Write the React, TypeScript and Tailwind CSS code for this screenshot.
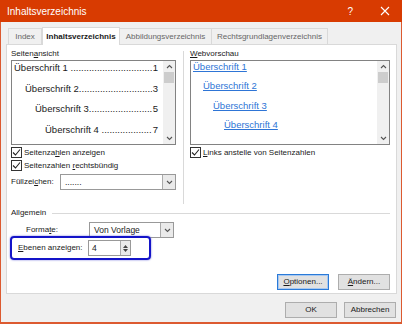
import React from "react";

const F = { fontFamily: '"Liberation Sans", Arial, sans-serif' };

function Check() {
  return (
    <span className="inline-flex w-[11px] h-[11px] border border-[#333] bg-white items-center justify-center shrink-0">
      <svg width="9" height="9" viewBox="0 0 9 9">
        <path d="M1 4.5 L3.5 7 L8 1.5" stroke="#222" strokeWidth="1.1" fill="none" />
      </svg>
    </span>
  );
}

function Chevron({ up }: { up?: boolean }) {
  return (
    <svg width="7" height="5" viewBox="0 0 7 5">
      <path d={up ? "M1 4 L3.5 1.5 L6 4" : "M1 1 L3.5 3.5 L6 1"} stroke="#555" strokeWidth="1.1" fill="none" />
    </svg>
  );
}

function ScrollBar() {
  return (
    <div className="w-[12px] h-full bg-[#f0f0f0] flex flex-col items-center shrink-0">
      <div className="h-[11px] flex items-center justify-center"><Chevron up /></div>
      <div className="w-[10px] h-[11px] bg-[#cdcdcd]" />
      <div className="flex-1" />
      <div className="h-[11px] flex items-center justify-center"><Chevron /></div>
    </div>
  );
}

function U({ children }: { children: React.ReactNode }) {
  return <span className="underline underline-offset-1">{children}</span>;
}

function Row({ label, num, indent, dots }: { label: string; num: string; indent: string; dots: number }) {
  return (
    <div className={`flex h-[21px] leading-[12px] ${indent} text-[9.5px] text-[#1a1a1a] whitespace-nowrap`}>
      <span className="shrink-0">{label + ".".repeat(dots)}</span>
      <span className="shrink-0 ml-auto">{num}</span>
    </div>
  );
}

function Select({ value, w }: { value: string; w: string }) {
  return (
    <div className={`${w} h-[16px] border border-[#999] bg-white flex items-center`}>
      <span className="flex-1 pl-[4px] text-[8.5px] text-[#1a1a1a] leading-none">{value}</span>
      <span className="w-[13px] h-full border-l border-[#aaa] bg-[#eaeaea] flex items-center justify-center"><Chevron /></span>
    </div>
  );
}

function Btn({ children, focus }: { children: React.ReactNode; focus?: boolean }) {
  return (
    <div
      className={`w-[52px] h-[16px] flex items-center justify-center text-[8px] text-[#1a1a1a] bg-[#e1e1e1] border ${focus ? "border-[#2a7ad8] shadow-[inset_0_0_0_1px_#a8c8f0]" : "border-[#adadad]"}`}
    >
      {children}
    </div>
  );
}

export default function App() {
  return (
    <div style={F} className="w-[402px] h-[324px] flex flex-col bg-[#dc5a30] overflow-hidden">
      <div className="h-[22px] bg-[#d83b01] flex items-center pl-[7px] pr-[12px] text-white text-[10px] shrink-0">
        <span className="flex-1">Inhaltsverzeichnis</span>
        <span className="mr-[27px] text-[10px]">?</span>
        <svg width="10" height="10" viewBox="0 0 10 10">
          <path d="M1 1 L9 9 M9 1 L1 9" stroke="#fff" strokeWidth="1.1" />
        </svg>
      </div>
      <div className="flex-1 ml-[1px] mr-[1px] mb-[2px] bg-[#f0f0f0] flex flex-col pl-[5px] pr-[4px]">
        <div className="flex items-end h-[22px] pl-[2px] text-[8px] shrink-0">
          <div className="w-[34px] h-[16px] flex items-center justify-center border border-b-0 border-[#d9d9d9] text-[#666]">Index</div>
          <div className="w-[78px] h-[18px] flex items-center justify-center border border-b-0 border-[#d9d9d9] bg-white text-[#1a1a1a] font-bold -mb-[1px] relative z-10">Inhaltsverzeichnis</div>
          <div className="w-[92px] h-[16px] flex items-center justify-center border border-b-0 border-l-0 border-[#d9d9d9] text-[#666]">Abbildungsverzeichnis</div>
          <div className="w-[116px] h-[16px] flex items-center justify-center border border-b-0 border-l-0 border-[#d9d9d9] text-[#666]">Rechtsgrundlagenverzeichnis</div>
        </div>
        <div className="h-[250px] bg-white border border-[#d9d9d9] flex flex-col pl-[4px] pr-[6px] pt-[2px] text-[8px] text-[#1a1a1a] shrink-0">
          <div className="flex h-[157px] shrink-0">
            <div className="w-[165px] flex flex-col">
              <div className="h-[13px] leading-[13px]">Seiten<U>a</U>nsicht</div>
              <div className="h-[85px] border border-[#828282] flex">
                <div className="flex-1 min-w-0 flex flex-col pl-[1px] pr-[5px] pt-[1px] overflow-hidden">
                  <Row label={"Überschrift 1\u00a0"} num="1" indent="pl-[1px]" dots={31} />
                  <Row label="Überschrift 2" num="3" indent="pl-[12px]" dots={28} />
                  <Row label="Überschrift 3" num="5" indent="pl-[22px]" dots={24} />
                  <Row label={"Überschrift 4\u00a0"} num="7" indent="pl-[32px]" dots={19} />
                </div>
                <ScrollBar />
              </div>
              <div className="flex items-center gap-[2px] h-[13px] mt-[1px]"><Check /><span>Seitenza<U>h</U>len anzeigen</span></div>
              <div className="flex items-center gap-[2px] h-[13px]"><Check /><span>Seitenzahlen <U>r</U>echtsbündig</span></div>
              <div className="flex items-center h-[16px] mt-[2px]">
                <span className="w-[49px] whitespace-nowrap">Füllzei<U>c</U>hen:</span>
                <Select value="......." w="w-[116px]" />
              </div>
            </div>
            <div className="w-[1px] bg-[#d9d9d9] ml-[7px] mr-[6px] mt-[4px]" />
            <div className="flex-1 flex flex-col">
              <div className="h-[13px] leading-[13px]"><U>W</U>ebvorschau</div>
              <div className="h-[85px] border border-[#828282] flex">
                <div className="flex-1 flex flex-col pl-[1px] text-[9.5px] text-[#2e75d6] whitespace-nowrap">
                  <div className="h-[19.4px] leading-[12px] pl-[1px]"><U>Überschrift 1</U></div>
                  <div className="h-[19.4px] leading-[12px] pl-[11px]"><U>Überschrift 2</U></div>
                  <div className="h-[19.4px] leading-[12px] pl-[21px]"><U>Überschrift 3</U></div>
                  <div className="h-[19.4px] leading-[12px] pl-[32px]"><U>Überschrift 4</U></div>
                </div>
                <ScrollBar />
              </div>
              <div className="flex items-center gap-[2px] h-[13px] mt-[1px]"><Check /><span><U>L</U>inks anstelle von Seitenzahlen</span></div>
            </div>
          </div>
          <div className="flex items-center h-[12px] mt-[3px]">
            <span>Allgemein</span>
            <div className="flex-1 h-[1px] bg-[#d9d9d9] ml-[6px]" />
          </div>
          <div className="flex items-center h-[16px] mt-[3px] pl-[15px]">
            <span className="w-[63px] whitespace-nowrap">Forma<U>t</U>e:</span>
            <Select value="Von Vorlage" w="w-[85px]" />
          </div>
          <div className="mt-[-2px] ml-[-1px] w-[141px] h-[24px] border-2 border-[#1414c8] rounded-[4px] flex items-center pl-[6px] shadow-[0_0_2px_#6a6ad8]">
            <span className="w-[70px] whitespace-nowrap"><U>E</U>benen anzeigen:</span>
            <div className="w-[43px] h-[16px] border border-[#999] bg-white flex items-center">
              <span className="flex-1 pl-[3px] text-[8.5px]">4</span>
              <div className="w-[10px] h-full border-l border-[#aaa] bg-[#eaeaea] flex flex-col items-center justify-center gap-[1px]">
                <svg width="5" height="3" viewBox="0 0 5 3"><path d="M0 3 L2.5 0 L5 3Z" fill="#444" /></svg>
                <svg width="5" height="3" viewBox="0 0 5 3"><path d="M0 0 L2.5 3 L5 0Z" fill="#444" /></svg>
              </div>
            </div>
          </div>
          <div className="flex justify-end gap-[9px] mt-[14px]">
            <Btn focus><span><U>O</U>ptionen...</span></Btn>
            <Btn><span><U>Ä</U>ndern...</span></Btn>
          </div>
        </div>
        <div className="flex justify-end gap-[7px] mt-[8px] pr-[1px]">
          <Btn>OK</Btn>
          <Btn>Abbrechen</Btn>
        </div>
      </div>
    </div>
  );
}
